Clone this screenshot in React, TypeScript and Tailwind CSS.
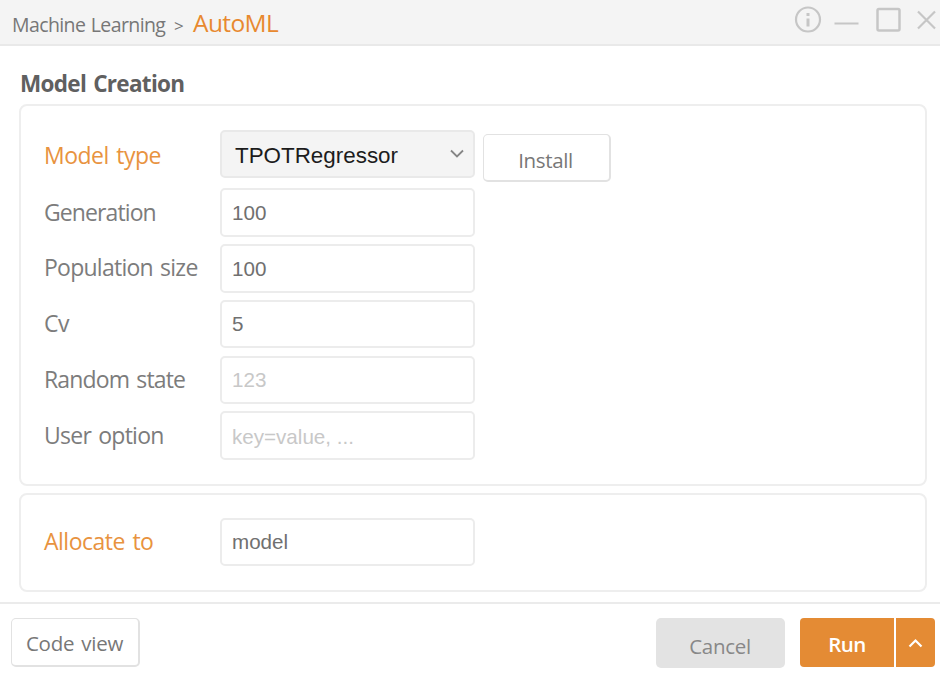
import React from "react";

const labelBase =
  "w-[176px] shrink-0 whitespace-nowrap font-['Open_Sans','Noto_Sans_CJK_KR',sans-serif] text-[23px] leading-[30px] [word-spacing:2px]";
const inputBase =
  "w-[255px] rounded-[5px] border-2 border-[#ececec] bg-white px-[10px] font-['Liberation_Sans',Arial,sans-serif] text-[20.6px] text-[#707070] outline-none placeholder:text-[#c8c8c8]";

type Field = { label: string; value?: string; placeholder?: string; tracking: string; size: string };

const fields: Field[] = [
  { label: "Generation", value: "100", tracking: "tracking-[-0.9px] pt-[9px]", size: "h-[49px]" },
  { label: "Population size", value: "100", tracking: "tracking-[-0.75px] pt-[8px]", size: "h-[49px]" },
  { label: "Cv", value: "5", tracking: "tracking-[-0.5px] pt-[8px]", size: "h-[48px]" },
  { label: "Random state", placeholder: "123", tracking: "tracking-[-0.85px] pt-[8px]", size: "h-[48px]" },
  { label: "User option", placeholder: "key=value, ...", tracking: "tracking-[-0.75px] pt-[9px]", size: "h-[49px] pt-[2px]" },
];

function Header() {
  return (
    <header className="flex h-[46px] shrink-0 justify-between border-b-2 border-[#e9e9e9] bg-[#f4f4f4]">
      <div className="flex items-baseline whitespace-nowrap pl-[12px] pt-[7px] text-[#777777]">
        <span className="w-[162px] text-[19.5px] leading-[32px] tracking-[-0.6px] [word-spacing:1px]">Machine Learning</span>
        <span className="w-[19px] text-[17px]">&gt;</span>
        <span className="text-[24.5px] leading-[32px] tracking-[-0.6px] text-[#e8892f]">AutoML</span>
      </div>
      <svg className="h-[44px] w-[160px] shrink-0" viewBox="0 0 160 44" fill="none" stroke="#c6c6c6" strokeWidth="2">
        <circle cx="28" cy="19.5" r="12" strokeWidth="2.2" />
        <path d="M28 18.5v8M28 13v3" strokeWidth="3" />
        <path d="M54.5 23.5h24" />
        <rect x="97.5" y="9" width="22" height="21.5" rx="1.5" strokeWidth="2.5" />
        <path d="M138 11.5l17 17M155 11.5l-17 17" strokeWidth="2.2" />
      </svg>
    </header>
  );
}

export default function App() {
  return (
    <div className="flex h-[674px] w-[940px] flex-col overflow-hidden bg-white font-['Open_Sans','Noto_Sans_CJK_KR',sans-serif]">
      <Header />
      <main className="flex h-[557px] shrink-0 flex-col pl-[19px] pr-[13px]">
        <h1 className="h-[58px] pl-[1px] pt-[22px] text-[22.5px] font-bold leading-[32px] tracking-[-0.7px] text-[#606060] [word-spacing:2px]">
          Model Creation
        </h1>
        <section className="h-[382px] shrink-0 rounded-[8px] border-2 border-[#eeeeee] pl-[23px] pt-[24px]">
          <div className="flex h-[58px]">
            <span className={`${labelBase} pt-[10px] tracking-[-0.5px] text-[#e8933f]`}>Model type</span>
            <button className="flex h-[48px] w-[255px] items-center justify-between rounded-[5px] border-2 border-[#e9e9e9] bg-[#f4f4f4] pl-[13px] pr-[9px] pt-[3px] font-['Liberation_Sans',Arial,sans-serif] text-[22.4px] text-[#1c1c1c]">
              TPOTRegressor
              <svg className="-mt-[3px] h-[10px] w-[14px]" viewBox="0 0 14 10" fill="none" stroke="#858585" strokeWidth="1.8">
                <path d="M1 1.5l6 6 6-6" />
              </svg>
            </button>
            <button className="ml-[8px] mt-[4px] h-[48px] w-[128px] rounded-[5px] border border-b-2 border-r-2 border-[#e2e2e2] pr-[2px] pt-[6px] text-[20.5px] tracking-[-0.35px] text-[#777777]">
              Install
            </button>
          </div>
          <div className="flex flex-col">
            {fields.map((f) => (
              <div key={f.label} className="flex h-[56px] last:-mt-px">
                <span className={`${labelBase} ${f.tracking} text-[#7c7c7c]`}>{f.label}</span>
                <input className={`${inputBase} ${f.size}`} defaultValue={f.value} placeholder={f.placeholder} />
              </div>
            ))}
          </div>
        </section>
        <section className="mt-[7px] flex h-[99px] shrink-0 rounded-[8px] border-2 border-[#eeeeee] pl-[23px] pt-[23px]">
          <span className={`${labelBase} pt-[8px] tracking-[-0.5px] text-[#e8933f]`}>Allocate to</span>
          <input className={`${inputBase} h-[48px]`} defaultValue="model" />
        </section>
      </main>
      <footer className="-mt-px flex h-[72px] shrink-0 justify-between border-t-2 border-[#ebebeb] pl-[11px] pr-[5px] pt-[14px] text-[20.5px]">
        <button className="h-[49px] w-[129px] whitespace-nowrap rounded-[5px] border border-b-2 border-r-2 border-[#e2e2e2] pr-[1px] pt-[3px] tracking-[-0.25px] text-[#777777] [word-spacing:2px]">
          Code view
        </button>
        <div className="flex">
          <button className="h-[50px] w-[129px] rounded-[5px] bg-[#e3e3e3] pr-[1px] pt-[6px] tracking-[-0.3px] text-[#888888]">Cancel</button>
          <button className="ml-[15px] h-[49px] w-[94px] rounded-l-[4px] bg-[#e48b34] pt-[4px] font-semibold tracking-[-0.5px] text-white">Run</button>
          <button className="ml-[2px] flex h-[49px] w-[39px] items-center justify-center rounded-r-[4px] bg-[#e48b34]">
            <svg className="h-[10px] w-[15px]" viewBox="0 0 15 10" fill="none" stroke="#ffffff" strokeWidth="2.2">
              <path d="M1.5 8.5l6-6 6 6" />
            </svg>
          </button>
        </div>
      </footer>
    </div>
  );
}
